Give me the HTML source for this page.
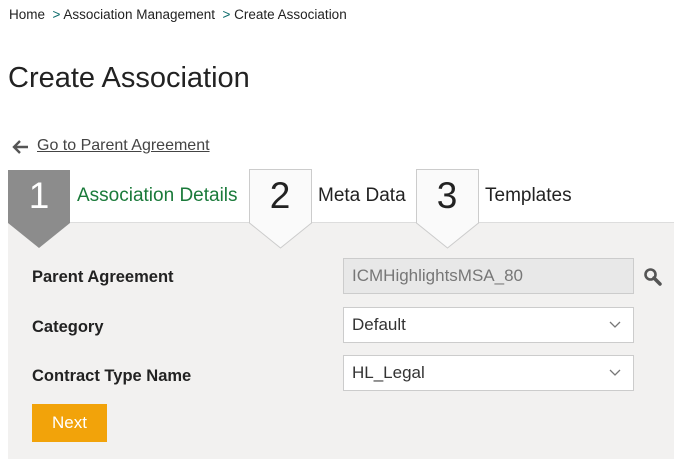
<!DOCTYPE html>
<html><head><style>
body{margin:0;width:674px;height:458px;background:#fff;font-family:"Liberation Sans",sans-serif;position:relative;overflow:hidden;color:#222}
.a{position:absolute;white-space:nowrap}
.inp{position:absolute;left:343px;width:281px;height:34px;border:1px solid #ccc;background:#fff;font-size:17px;line-height:34px;padding-left:8px;color:#333}
.lbl{position:absolute;left:32px;font-size:16.5px;font-weight:bold;color:#222}
.chev{position:absolute;right:12px;top:13px}
</style></head><body>
<div class="a" style="left:9px;top:7px;font-size:13.5px;color:#222">Home &nbsp;<span style="color:#0a6a6a">&gt;</span> Association Management &nbsp;<span style="color:#0a6a6a">&gt;</span> Create Association</div>
<div class="a" style="left:8px;top:62px;font-size:29px;color:#222">Create Association</div>
<svg class="a" style="left:12px;top:139px" width="18" height="16"><path d="M2 8 H16 M8 2 L2 8 L8 14" fill="none" stroke="#555" stroke-width="2.4"/></svg>
<div class="a" style="left:37px;top:137px;font-size:16px;color:#444;text-decoration:underline">Go to Parent Agreement</div>
<div class="a" style="left:8px;top:222px;width:666px;height:236px;background:#f2f1f0;border-top:1px solid #ddd"></div>
<svg class="a" style="left:0;top:165px" width="674" height="90">
<polygon points="8,5 70,5 70,58 39,83 8,58" fill="#8c8c8c"/>
<polygon points="249.5,4.5 311.5,4.5 311.5,58 280.5,83 249.5,58" fill="#fafafa" stroke="#ccc"/>
<polygon points="416.5,4.5 478.5,4.5 478.5,58 447.5,83 416.5,58" fill="#fafafa" stroke="#ccc"/>
</svg>
<div class="a" style="left:8px;width:62px;text-align:center;top:175px;font-size:37px;color:#fff">1</div>
<div class="a" style="left:249px;width:62px;text-align:center;top:175px;font-size:37px;color:#222">2</div>
<div class="a" style="left:416px;width:62px;text-align:center;top:175px;font-size:37px;color:#222">3</div>
<div class="a" style="left:77px;top:185px;font-size:19px;color:#1a7a3a">Association Details</div>
<div class="a" style="left:318px;top:185px;font-size:19px;color:#222">Meta Data</div>
<div class="a" style="left:485px;top:185px;font-size:19px;color:#222">Templates</div>
<div class="lbl" style="top:268px">Parent Agreement</div>
<div class="lbl" style="top:318px">Category</div>
<div class="lbl" style="top:367px">Contract Type Name</div>
<div class="inp" style="top:258px;background:#e8e8e8;color:#777">ICMHighlightsMSA_80</div>
<svg class="a" style="left:643px;top:267px" width="20" height="20"><circle cx="7.5" cy="7.5" r="5" fill="none" stroke="#555" stroke-width="2.6"/><line x1="11" y1="11" x2="17" y2="17" stroke="#555" stroke-width="3.5" stroke-linecap="round"/></svg>
<div class="inp" style="top:307px">Default<svg class="chev" width="12" height="8"><polyline points="1,1 6,6 11,1" fill="none" stroke="#777" stroke-width="1.3"/></svg></div>
<div class="inp" style="top:355px">HL_Legal<svg class="chev" width="12" height="8"><polyline points="1,1 6,6 11,1" fill="none" stroke="#777" stroke-width="1.3"/></svg></div>
<div class="a" style="left:32px;top:404px;width:75px;height:38px;background:#f2a30a;color:#fff;font-size:17px;line-height:38px;text-align:center">Next</div>
</body></html>
